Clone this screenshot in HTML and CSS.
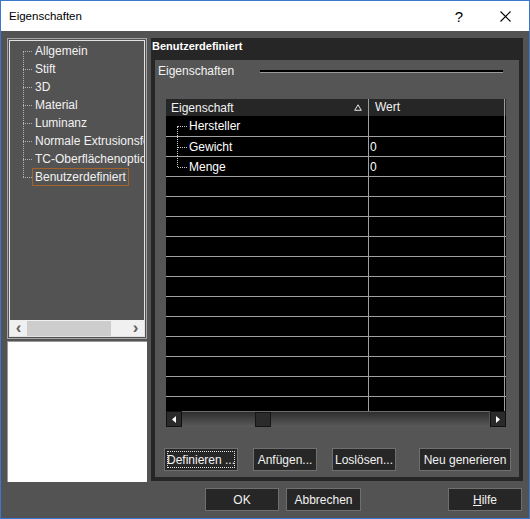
FILE: index.html
```html
<!DOCTYPE html>
<html lang="de">
<head>
    <meta charset="UTF-8">
    <title>Eigenschaften</title>
    <link rel="stylesheet" href="styles.css">
</head>
<body>
    <div class="window">
        <div class="titlebar">
            <span class="title">Eigenschaften</span>
            <span class="help">?</span>
            <span class="close">
                <svg width="11" height="11" viewBox="0 0 11 11"><path d="M0.5 0.5 L10.5 10.5 M10.5 0.5 L0.5 10.5" stroke="#000" stroke-width="1.1"/></svg>
            </span>
        </div>

        <div class="client">
            <div class="main">
                <div class="side">
                    <div class="tree-box">
                        <ul class="tree">
                            <li>Allgemein</li>
                            <li>Stift</li>
                            <li>3D</li>
                            <li>Material</li>
                            <li>Luminanz</li>
                            <li>Normale Extrusionsform</li>
                            <li>TC-Oberflächenoptionen</li>
                            <li class="sel">Benutzerdefiniert</li>
                        </ul>
                        <div class="lscroll">
                            <span class="larrow">&lsaquo;</span>
                            <div class="lthumb"></div>
                            <span class="larrow">&rsaquo;</span>
                        </div>
                    </div>
                    <div class="preview"></div>
                </div>

                <div class="page">
                    <div class="page-title">Benutzerdefiniert</div>
                    <div class="group">
                        <div class="group-head">
                            <span class="group-label">Eigenschaften</span>
                            <div class="rule"></div>
                        </div>

                        <div class="grid">
                            <div class="grid-head">
                                <div class="hcell c1">Eigenschaft
                                    <svg class="sort" width="8" height="7" viewBox="0 0 8 7"><path d="M4 0.8 L7.3 6.3 L0.7 6.3 Z" fill="none" stroke="#e8e8e8" stroke-width="1"/></svg>
                                </div>
                                <div class="hcell c2">Wert</div>
                            </div>
                            <div class="grid-body">
                                <div class="row"><div class="cell c1 node first">Hersteller</div><div class="cell c2"></div></div>
                                <div class="row"><div class="cell c1 node">Gewicht</div><div class="cell c2">0</div></div>
                                <div class="row"><div class="cell c1 node last">Menge</div><div class="cell c2">0</div></div>
                                <div class="row"><div class="cell c1"></div><div class="cell c2"></div></div>
                                <div class="row"><div class="cell c1"></div><div class="cell c2"></div></div>
                                <div class="row"><div class="cell c1"></div><div class="cell c2"></div></div>
                                <div class="row"><div class="cell c1"></div><div class="cell c2"></div></div>
                                <div class="row"><div class="cell c1"></div><div class="cell c2"></div></div>
                                <div class="row"><div class="cell c1"></div><div class="cell c2"></div></div>
                                <div class="row"><div class="cell c1"></div><div class="cell c2"></div></div>
                                <div class="row"><div class="cell c1"></div><div class="cell c2"></div></div>
                                <div class="row"><div class="cell c1"></div><div class="cell c2"></div></div>
                                <div class="row"><div class="cell c1"></div><div class="cell c2"></div></div>
                                <div class="row"><div class="cell c1"></div><div class="cell c2"></div></div>
                                <div class="row"><div class="cell c1"></div><div class="cell c2"></div></div>
                            </div>
                            <div class="dscroll">
                                <div class="dbtn"><svg width="4" height="7" viewBox="0 0 4 7"><path d="M4 0 L0 3.5 L4 7 Z" fill="#fff"/></svg></div>
                                <div class="dtrack">
                                    <div class="dthumb"></div>
                                </div>
                                <div class="dbtn"><svg width="4" height="7" viewBox="0 0 4 7"><path d="M0 0 L4 3.5 L0 7 Z" fill="#fff"/></svg></div>
                            </div>
                        </div>

                        <div class="actions">
                            <button class="btn focus w74">Definieren ...</button>
                            <button class="btn w64">Anfügen...</button>
                            <button class="btn w64">Loslösen...</button>
                            <button class="btn w92 push">Neu generieren</button>
                        </div>
                    </div>
                </div>
            </div>

            <div class="footer">
                <button class="btn w74">OK</button>
                <button class="btn w75">Abbrechen</button>
                <button class="btn w74 push"><u>H</u>ilfe</button>
            </div>
        </div>
    </div>
</body>
</html>
```

FILE: styles.css
```css
* {
    box-sizing: border-box;
}
body {
    margin: 0;
    font-family: "Liberation Sans", Arial, sans-serif;
    font-size: 12px;
    background: #fff;
}
.window {
    width: 530px;
    height: 519px;
    border: 1px solid #3a78cc;
    display: flex;
    flex-direction: column;
}

/* title bar */
.titlebar {
    height: 30px;
    background: #fff;
    display: flex;
    align-items: center;
    padding-left: 8px;
}
.title {
    font-size: 11.5px;
    color: #000;
    flex: 1;
}
.help {
    font-size: 15px;
    width: 46px;
    text-align: center;
}
.close {
    width: 46px;
    display: flex;
    justify-content: center;
    margin-right: 1px;
}

/* client area */
.client {
    flex: 1;
    background: #535353;
    padding: 7px 7px 0 6px;
    color: #f2f2f2;
}
.main {
    display: flex;
    gap: 4px;
    height: 444px;
}
.side {
    width: 140px;
    display: flex;
    flex-direction: column;
    gap: 2px;
}
.tree-box {
    height: 301px;
    border: 1px solid #a6a6a6;
    padding: 1px;
    display: flex;
    flex-direction: column;
}
.tree {
    list-style: none;
    margin: 0;
    padding: 1px 0 0 22px;
    flex: 1;
    overflow: hidden;
    border: 1px solid #e2e2e2;
    border-bottom: none;
}
.tree li {
    position: relative;
    height: 18px;
    line-height: 16px;
    padding: 0 2px;
    border: 1px solid transparent;
    white-space: nowrap;
    width: max-content;
}
.tree li::before {
    content: "";
    position: absolute;
    left: -10px;
    width: 9px;
    top: 8px;
    border-top: 1px dotted #b4b4b4;
}
.tree li + li::after {
    content: "";
    position: absolute;
    left: -10px;
    top: -10px;
    height: 18px;
    border-left: 1px dotted #b4b4b4;
}
.tree li.sel {
    border-color: #a4622a;
}
.lscroll {
    height: 17px;
    background: #f0f0f0;
    border: 1px solid #e2e2e2;
    border-top: none;
    display: flex;
    align-items: center;
}
.larrow {
    width: 17px;
    text-align: center;
    color: #606060;
    font-size: 17px;
    font-weight: bold;
    line-height: 14px;
}
.lthumb {
    width: 84px;
    height: 15px;
    background: #cdcdcd;
    margin-right: auto;
}
.preview {
    height: 141px;
    background: #fff;
    border-top: 1px solid #9a9a9a;
    border-left: 1px solid #9a9a9a;
}

/* property page */
.page {
    width: 372px;
    height: 443px;
    background: #262626;
    display: flex;
    flex-direction: column;
}
.page-title {
    height: 22px;
    padding: 2px 1px 0;
    font-size: 11px;
    font-weight: bold;
    color: #fff;
}
.group {
    flex: 1;
    margin: 0 4px 4px;
    background: #555;
}
.group-head {
    height: 22px;
    display: flex;
    align-items: center;
    padding-left: 3px;
}
.group-label {
    width: 102px;
}
.rule {
    flex: 1;
    margin-right: 16px;
    height: 3px;
    background: #000;
    border-bottom: 1px solid #9a9a9a;
}

/* property grid */
.grid {
    margin: 17px 13px 0 11px;
    width: 340px;
    background: #000;
}
.grid-head {
    height: 17px;
    background: #262626;
    display: flex;
}
.hcell {
    line-height: 16px;
    padding-left: 5px;
    border-right: 1px solid #9c9c9c;
}
.hcell.c1 {
    width: 203px;
    display: flex;
    align-items: center;
}
.hcell.c2 {
    width: 136px;
    padding-left: 6px;
}
.sort {
    margin-left: auto;
    margin-right: 6px;
}
.grid-body {
    height: 295px;
    overflow: hidden;
}
.row {
    height: 20px;
    display: flex;
}
.row + .row {
    border-top: 1px solid #a0a0a0;
}
.cell {
    line-height: 21px;
    border-right: 1px solid #a0a0a0;
    color: #fff;
}
.cell.c1 {
    width: 203px;
}
.cell.c2 {
    width: 136px;
    padding-left: 1px;
}
.node {
    position: relative;
    padding-left: 23px;
}
.node::before {
    content: "";
    position: absolute;
    left: 11px;
    top: -1px;
    bottom: 0;
    border-left: 1px dotted #c8c8c8;
}
.node::after {
    content: "";
    position: absolute;
    left: 12px;
    width: 9px;
    top: 10px;
    border-top: 1px dotted #c8c8c8;
}
.node.first::before {
    top: 10px;
}
.node.last::before {
    bottom: 9px;
}
.dscroll {
    height: 16px;
    display: flex;
    background: #555;
}
.dbtn {
    width: 16px;
    background: #2a2a2a;
    border: 1px solid #111;
    display: flex;
    align-items: center;
    justify-content: center;
}
.dtrack {
    flex: 1;
    margin-right: 1px;
    background: linear-gradient(to bottom, #2e2e2e, #5a5a5a);
    border-top: 1px solid #6a6a6a;
    padding-left: 73px;
}
.dthumb {
    width: 16px;
    height: 15px;
    background: #2b2b2b;
    border: 1px solid #141414;
}

/* buttons */
.btn {
    height: 23px;
    background: #262626;
    color: #f2f2f2;
    border: 1px solid #6f6f6f;
    font-family: "Liberation Sans", Arial, sans-serif;
    font-size: 12px;
    padding: 0;
}
.btn.focus {
    outline: 1px dotted #e0e0e0;
    outline-offset: -4px;
}
.w64 { width: 64px; }
.w74 { width: 74px; }
.w75 { width: 75px; }
.w92 { width: 92px; }
.push {
    margin-left: auto !important;
}
.actions {
    margin-top: 21px;
    padding: 0 8px 0 9px;
    display: flex;
    gap: 15px;
}
.footer {
    margin-top: 6px;
    padding-left: 198px;
    display: flex;
    gap: 7px;
}
```
